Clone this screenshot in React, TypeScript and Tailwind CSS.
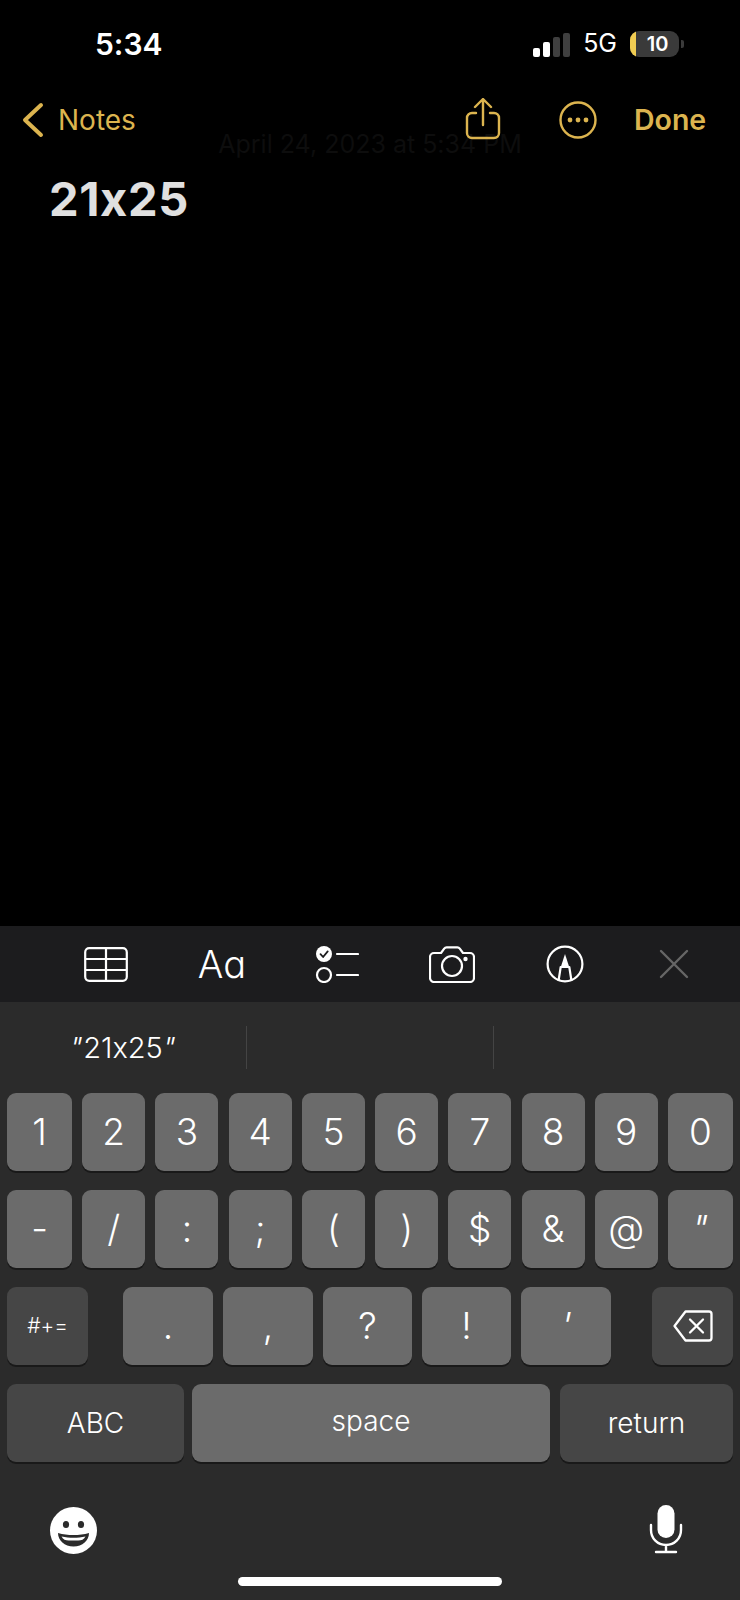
import React from 'react';

const GOLD = '#dcb44f';

const Key = ({ w, dark, size, children }: { w: string; dark?: boolean; size: string; children: React.ReactNode }) => (
  <div
    className={`${w} ${size} ${dark ? 'bg-[#464646]' : 'bg-[#6b6b6b]'} h-[78px] rounded-[9px] shadow-[0_2px_0_#191919] flex items-center justify-center text-white font-light`}
  >
    {children}
  </div>
);

const ROW1 = ['1', '2', '3', '4', '5', '6', '7', '8', '9', '0'];
const ROW2 = ['-', '/', ':', ';', '(', ')', '$', '&', '@'];

const ShareIcon = () => (
  <svg width="36" height="42" viewBox="0 0 36 42" fill="none" stroke={GOLD} strokeWidth="2.4" strokeLinecap="round" strokeLinejoin="round">
    <path d="M11 15H7a5 5 0 0 0-5 5v15a5 5 0 0 0 5 5h22a5 5 0 0 0 5-5V20a5 5 0 0 0-5-5h-4" />
    <path d="M18 27V2M10 9l8-8 8 8" />
  </svg>
);

const MoreIcon = () => (
  <svg width="38" height="38" viewBox="0 0 38 38" fill="none">
    <circle cx="19" cy="19" r="17.5" stroke={GOLD} strokeWidth="2.4" />
    <circle cx="11" cy="19" r="2.4" fill={GOLD} />
    <circle cx="19" cy="19" r="2.4" fill={GOLD} />
    <circle cx="27" cy="19" r="2.4" fill={GOLD} />
  </svg>
);

const TableIcon = () => (
  <svg width="44" height="35" viewBox="0 0 44 35" fill="none" stroke="white" strokeWidth="2.2">
    <rect x="1.2" y="1.2" width="41.6" height="32.6" rx="4" />
    <path d="M1 12h42M1 23h42M22 1v33" />
  </svg>
);

const ChecklistIcon = () => (
  <svg width="44" height="38" viewBox="0 0 44 38" fill="none">
    <circle cx="9" cy="9" r="8" fill="white" />
    <path d="M5.5 9.2l2.6 2.8 4.6-5.6" stroke="#1c1c1e" strokeWidth="1.8" strokeLinecap="round" strokeLinejoin="round" />
    <circle cx="9" cy="30" r="7" stroke="white" strokeWidth="2.2" />
    <path d="M22 9h21M22 30h21" stroke="white" strokeWidth="2.2" strokeLinecap="round" />
  </svg>
);

const CameraIcon = () => (
  <svg width="46" height="37" viewBox="0 0 46 37" fill="none" stroke="white" strokeWidth="2.2" strokeLinejoin="round">
    <path d="M5 7h7l3.2-4.4a3 3 0 0 1 2.4-1.2h10.8a3 3 0 0 1 2.4 1.2L34 7h7a4 4 0 0 1 4 4v21a4 4 0 0 1-4 4H5a4 4 0 0 1-4-4V11a4 4 0 0 1 4-4z" />
    <circle cx="23" cy="20" r="10" />
    <circle cx="36.5" cy="13" r="2.2" fill="white" stroke="none" />
  </svg>
);

const MarkupIcon = () => (
  <svg width="38" height="38" viewBox="0 0 38 38" fill="none" stroke="white" strokeWidth="2.2">
    <circle cx="19" cy="19" r="17.4" />
    <path d="M12.5 36l2.2-14h8.6l2.2 14" strokeLinejoin="round" />
    <path d="M19 9l4.2 13h-8.4z" fill="white" stroke="none" />
  </svg>
);

const CloseIcon = () => (
  <svg width="30" height="30" viewBox="0 0 30 30" fill="none" stroke="#666666" strokeWidth="2.4" strokeLinecap="round">
    <path d="M2 2l26 26M28 2L2 28" />
  </svg>
);

const DeleteIcon = () => (
  <svg width="40" height="32" viewBox="0 0 40 32" fill="none" stroke="white" strokeWidth="2.3" strokeLinejoin="round" strokeLinecap="round">
    <path d="M12.5 1.5H36a2.5 2.5 0 0 1 2.5 2.5v24a2.5 2.5 0 0 1-2.5 2.5H12.5L1.5 16z" />
    <path d="M17 9.5l13 13M30 9.5l-13 13" />
  </svg>
);

const EmojiIcon = () => (
  <svg width="47" height="47" viewBox="0 0 47 47">
    <circle cx="23.5" cy="23.5" r="23.5" fill="white" />
    <ellipse cx="16" cy="17.5" rx="3.1" ry="3.6" fill="#2b2b2b" />
    <ellipse cx="31" cy="17.5" rx="3.1" ry="3.6" fill="#2b2b2b" />
    <path d="M8 26c5 1.6 10 2 15.5 2S34 27.600 39 26c0 7.500-6.500 13.500-15.500 13.500S8 33.500 8 26z" fill="#2b2b2b" />
    <path d="M11.500 29.500c4 1 8 1.300 12 1.300s8-.3 12-1.300c-1 1.500-1.800 2.500-3 3.200-2.500.6-5.800.9-9 .9s-6.500-.3-9-.9c-1.200-.7-2-1.700-3-3.200z" fill="white" />
  </svg>
);

const MicIcon = () => (
  <svg width="34" height="50" viewBox="0 0 34 50" fill="none">
    <rect x="8.500" y="1" width="17" height="33" rx="8.500" fill="white" />
    <path d="M2 21v5c0 8.500 6.500 15 15 15s15-6.500 15-15v-5M17 41v7M7 48h20" stroke="white" strokeWidth="2.400" strokeLinecap="round" />
  </svg>
);

export default function App() {
  return (
    <div className="w-[740px] h-[1600px] bg-black flex flex-col font-['Inter','Liberation_Sans',sans-serif] [font-feature-settings:'calt'_0] overflow-hidden">
      {/* status bar */}
      <div className="h-[88px] flex items-center justify-between pl-[95px] pr-[56px] shrink-0">
        <span className="text-white text-[30px] font-semibold">5:34</span>
        <div className="flex items-center">
          <div className="flex items-end gap-[3px] h-[26px]">
            <div className="w-[7px] h-[9px] rounded-[2px] bg-white" />
            <div className="w-[7px] h-[15px] rounded-[2px] bg-white" />
            <div className="w-[7px] h-[20px] rounded-[2px] bg-[#3f3f3f]" />
            <div className="w-[7px] h-[24px] rounded-[2px] bg-[#3f3f3f]" />
          </div>
          <span className="text-white text-[25px] ml-[13px] mr-[13px]">5G</span>
          <div className="flex items-center gap-[2px]">
            <div className="w-[49px] h-[26px] rounded-[9px] bg-[#3a3a3a] overflow-hidden flex">
              <div className="w-[6px] bg-[#f0cc52]" />
              <span className="flex-1 text-center text-white text-[20px] leading-[26px] font-semibold">10</span>
            </div>
            <div className="w-[3px] h-[8px] rounded-r-[2px] bg-[#3a3a3a]" />
          </div>
        </div>
      </div>

      {/* nav bar */}
      <div className="relative z-10 mt-[9px] h-[46px] flex items-center shrink-0 text-[#dcb44f]">
        <svg className="ml-[22px]" width="22" height="36" viewBox="0 0 22 36" fill="none" stroke={GOLD} strokeWidth="4" strokeLinecap="round" strokeLinejoin="round">
          <path d="M19 3L3 18l16 15" />
        </svg>
        <span className="ml-[14px] w-[78px] text-[28px]">Notes</span>
        <div className="ml-[329px] -mt-[2px]"><ShareIcon /></div>
        <div className="ml-[58px]"><MoreIcon /></div>
        <span className="ml-[37px] text-[28.5px] font-semibold">Done</span>
      </div>

      <div className="-mt-[14px] text-center text-[#0d0d0d] text-[25px] leading-[30px] shrink-0">April 24, 2023 at 5:34 PM</div>

      <div className="ml-[49px] mt-[12px] text-[#e0e0e0] text-[47px] tracking-[0.6px] leading-[56px] font-bold shrink-0">21x25</div>

      <div className="flex-1" />

      {/* format toolbar */}
      <div className="h-[76px] bg-[#1c1c1e] flex items-center pl-[48px] shrink-0">
        <div className="w-[116px] flex justify-center"><TableIcon /></div>
        <div className="w-[116px] flex justify-center text-white text-[38px] font-light">Aɑ</div>
        <div className="w-[114px] flex justify-center"><ChecklistIcon /></div>
        <div className="w-[116px] flex justify-center"><CameraIcon /></div>
        <div className="w-[110px] flex justify-center"><MarkupIcon /></div>
        <div className="w-[108px] flex justify-center"><CloseIcon /></div>
      </div>

      {/* keyboard */}
      <div className="h-[598px] bg-[#2b2b2b] flex flex-col shrink-0 px-[7px]">
        <div className="h-[91px] -mx-[7px] flex items-center shrink-0">
          <div className="w-[247px] h-[43px] border-r border-[#444444] flex items-center justify-center text-white text-[29px] font-light">
            <span className="inline-block -skew-x-12">"</span>21x25<span className="inline-block -skew-x-12">"</span>
          </div>
          <div className="w-[247px] h-[43px] border-r border-[#444444]" />
        </div>

        <div className="flex flex-col gap-[19px]">
          <div className="flex justify-between">
            {ROW1.map((k, i) => (
              <Key key={k} size="text-[37px]" w={i === 0 || i === 9 ? 'w-[65px]' : 'w-[63px]'}>{k}</Key>
            ))}
          </div>
          <div className="flex justify-between">
            {ROW2.map((k, i) => (
              <Key key={k} size="text-[37px]" w={i === 0 ? 'w-[65px]' : 'w-[63px]'}>{k}</Key>
            ))}
            <Key size="text-[37px]" w="w-[65px]"><span className="inline-block -skew-x-12">"</span></Key>
          </div>
          <div className="flex">
            <Key dark size="text-[21px]" w="w-[81px]">#+=</Key>
            <div className="ml-[35px] flex gap-[10px]">
              <Key size="text-[37px]" w="w-[90px]">.</Key>
              <Key size="text-[37px]" w="w-[90px]">,</Key>
              <Key size="text-[37px]" w="w-[89px]">?</Key>
              <Key size="text-[37px]" w="w-[89px]">!</Key>
              <Key size="text-[37px]" w="w-[90px]"><span className="inline-block -skew-x-12">'</span></Key>
            </div>
            <div className="ml-auto">
              <Key dark size="text-[37px]" w="w-[81px]"><DeleteIcon /></Key>
            </div>
          </div>
          <div className="flex gap-[8px]">
            <Key dark size="text-[28px]" w="w-[177px]">ABC</Key>
            <Key size="text-[28px]" w="w-[358px]"><span className="-mt-[4px]">space</span></Key>
            <div className="ml-[2px]">
              <Key dark size="text-[28px]" w="w-[173px]">return</Key>
            </div>
          </div>
        </div>

        <div className="flex justify-between items-center mt-[42px] pl-[43px] pr-[50px] shrink-0">
          <div className="mt-[2px]"><EmojiIcon /></div>
          <MicIcon />
        </div>

        <div className="mt-[23px] mx-auto w-[264px] h-[9px] rounded-full bg-white shrink-0" />
      </div>
    </div>
  );
}
